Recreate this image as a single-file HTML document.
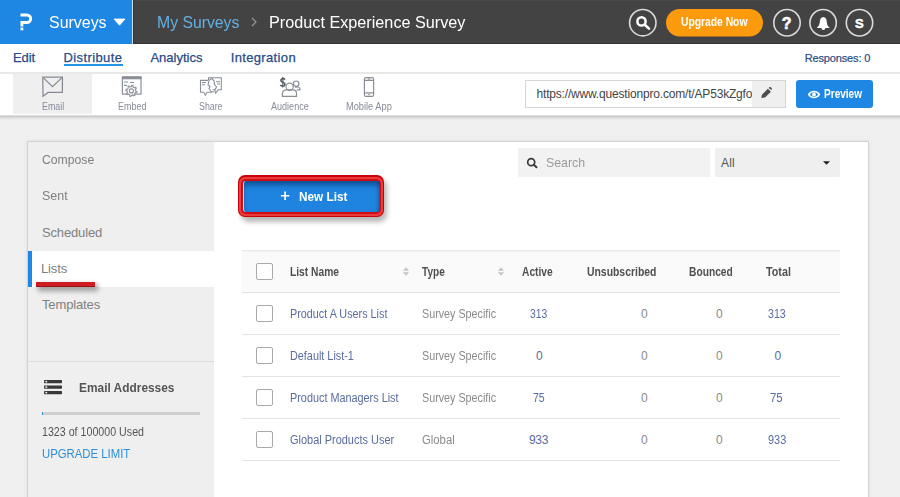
<!DOCTYPE html>
<html><head><meta charset="utf-8">
<style>
*{box-sizing:border-box;margin:0;padding:0}
html,body{width:900px;height:497px;overflow:hidden;background:#f0f0f0;font-family:"Liberation Sans",sans-serif;position:relative}
.a{position:absolute}
.t{position:absolute;white-space:nowrap;line-height:1;font-family:"Liberation Sans",sans-serif}
svg{position:absolute;overflow:visible}
.cb{position:absolute;width:17px;height:17px;border:1px solid #a9a9a9;border-radius:2px;background:#fff}
.hl{position:absolute;left:242px;width:598px;height:1px;background:#e3e3e3}
</style></head><body>
<!-- top bar -->
<div class="a" style="left:0;top:0;width:900px;height:44px;background:#434343;border-top:1px solid #4a4a4a;border-bottom:1px solid #343434"></div>
<div class="a" style="left:0;top:0;width:132px;height:44px;background:#1e87e4"></div>
<div class="a" style="left:132px;top:0;width:1px;height:44px;background:#c9dff2"></div>
<div class="a" style="left:133px;top:0;width:1px;height:44px;background:#353535"></div>
<svg style="left:0;top:0" width="900" height="44">
  <path d="M20.5 15 H27 A3.75 3.75 0 0 1 27 22.5 H21.9 V26.4" fill="none" stroke="#fff" stroke-width="2.8"/>
  <rect x="20.5" y="27.6" width="2.8" height="2.7" fill="#fff"/>
  <path d="M114 19 H125 L119.5 25.2 Z" fill="#fff" stroke="#fff" stroke-width="0.8" stroke-linejoin="round"/>
  <path d="M252 18 L256 22 L252 26" fill="none" stroke="#9a9a9a" stroke-width="1.2"/>
  <circle cx="642.8" cy="22.7" r="13.2" fill="none" stroke="#d9d9d9" stroke-width="1.6"/>
  <circle cx="641.5" cy="21.4" r="4.1" fill="none" stroke="#fff" stroke-width="2.5"/>
  <path d="M644.8 24.7 L649 28.6" stroke="#fff" stroke-width="2.6" stroke-linecap="round"/>
  <rect x="666" y="9" width="97" height="27.4" rx="13.7" fill="#fc9a0e"/>
  <circle cx="787" cy="22.75" r="13.2" fill="none" stroke="#d9d9d9" stroke-width="1.6"/>
  <circle cx="823.1" cy="22.75" r="13.2" fill="none" stroke="#d9d9d9" stroke-width="1.6"/>
  <circle cx="859.5" cy="22.75" r="13.2" fill="none" stroke="#d9d9d9" stroke-width="1.6"/>
  <path d="M823.3 16.9 C821.5 17.2 820.2 18.3 820 20.5 C819.7 24 819.2 25.8 817 27.4 V28.1 H829.4 V27.4 C827.3 25.8 826.9 24 826.6 20.5 C826.4 18.3 825.1 17.2 823.3 16.9 Z" fill="#fff"/>
  <path d="M821.4 28 A1.95 1.95 0 0 0 825.3 28 Z" fill="#fff"/>
</svg>

<!-- nav -->
<div class="a" style="left:0;top:44px;width:900px;height:29px;background:#fff"></div>
<div class="a" style="left:0;top:72px;width:900px;height:2px;background:#e8e8e8"></div>
<div class="a" style="left:64px;top:64px;width:58.5px;height:2px;background:#2393e6"></div>

<!-- toolbar -->
<div class="a" style="left:0;top:74px;width:900px;height:41px;background:#fff"></div>
<div class="a" style="left:0;top:115px;width:900px;height:1px;background:#dedede"></div>
<div class="a" style="left:0;top:116px;width:900px;height:1px;background:#cbcbcb"></div>
<div class="a" style="left:0;top:117px;width:900px;height:1px;background:#d9d9d9"></div>
<div class="a" style="left:0;top:118px;width:900px;height:1px;background:#e4e4e4"></div>
<div class="a" style="left:0;top:119px;width:900px;height:1px;background:#ebebeb"></div>
<div class="a" style="left:13px;top:74px;width:79px;height:40px;background:#efefef"></div>
<svg style="left:0;top:0" width="900" height="120">
  <g fill="none" stroke="#868b93" stroke-width="1.25">
    <path d="M42.8 77.1 H62.4 V92.4 H48.2 L43 96.2 Z"/>
    <path d="M43.2 77.6 L52.5 86.6 L62 77.6"/>
  </g>
  <g fill="none" stroke="#8a8f97" stroke-width="1.2">
    <rect x="122.4" y="76.9" width="18.6" height="17.2"/>
    <path d="M124 82 H128 M130 82.5 H134 M124 85.3 H127"/>
    
  </g>
  <rect x="122" y="76.5" width="19.4" height="2.8" fill="#8a8f97"/>
  <path d="M135.70 90.90 L136.98 91.43 L136.75 92.55 L135.37 92.55 L134.44 93.94 L134.97 95.21 L134.02 95.85 L133.05 94.87 L131.40 95.20 L130.87 96.48 L129.75 96.25 L129.75 94.87 L128.36 93.94 L127.09 94.47 L126.45 93.52 L127.43 92.55 L127.10 90.90 L125.82 90.37 L126.05 89.25 L127.43 89.25 L128.36 87.86 L127.83 86.59 L128.78 85.95 L129.75 86.93 L131.40 86.60 L131.93 85.32 L133.05 85.55 L133.05 86.93 L134.44 87.86 L135.71 87.33 L136.35 88.28 L135.37 89.25 Z" fill="#fff" stroke="#8a8f97" stroke-width="1.1" stroke-linejoin="round"/>
  <circle cx="131.4" cy="90.9" r="2" fill="none" stroke="#8a8f97" stroke-width="1.1"/>
  <g fill="none" stroke="#8a8f97" stroke-width="1.1">
    <path d="M208 80.4 H200.5 V92.3 H203.6 L205.4 95.2 L207 92.3 H212"/>
    <path d="M208.5 80 V77.7 H221.3 V89.8 H218.3 L215.6 93 L214.8 89.8 H212.5"/>
    <path d="M212 77.8 L209 80.5 L208 85 L210 86.5 L209 88.5 L211 91.5 L214 92"/>
    <path d="M211.7 78.5 L214 80.8 L214.5 84.5 L216.6 87 L214.8 89.6"/>
    <path d="M202 82.5 H206 M202 84.8 H205 M216 81.8 H220 M217 84 H220"/>
  </g>
  <path d="M285 79.6 C284.2 78.6 282.8 78.5 281.8 78.9 C280.5 79.5 280.6 81.2 281.8 81.8 L283.8 82.8 C285.3 83.5 285.3 85.6 283.6 86 C282.5 86.3 281.1 86 280.3 85" fill="none" stroke="#5d626b" stroke-width="1.7"/><path d="M282.8 76.9 V87.6" stroke="#5d626b" stroke-width="1.2"/>
  <g fill="none" stroke="#8a8f97" stroke-width="1.2">
    <circle cx="296.2" cy="83.7" r="2.7"/>
    <path d="M295.2 87.6 C296.5 86.6 299.6 86.6 299.9 88.6 V89.9 H296.8"/>
    <circle cx="289.6" cy="86.7" r="3.6"/>
    <path d="M282.4 96.4 V93.5 C282.4 91 285 89.9 286 89.9 H293 C294.5 89.9 296.5 91 296.5 93.5 V96.4 Z"/>
  </g>
  <g fill="none" stroke="#8a8f97" stroke-width="1.2">
    <rect x="364.4" y="77.6" width="9.2" height="18.8" rx="1.5"/>
    <path d="M364.4 80.3 H373.6 M364.4 92.8 H373.6 M367.8 79 H370.2"/>
  </g>
  <circle cx="369" cy="94.6" r="0.8" fill="#8a8f97"/>
</svg>
<!-- url input -->
<div class="a" style="left:525px;top:80px;width:261px;height:28px;border:1px solid #d6d6d6;background:#fff"></div>

<!-- card -->
<div class="a" style="left:28px;top:142px;width:840px;height:360px;background:#fff;box-shadow:0 0 0 1px rgba(0,0,0,.08),0 0 4px 1px rgba(0,0,0,.08)"></div>
<div class="a" style="left:28px;top:142px;width:186px;height:360px;background:#efefef"></div>
<div class="a" style="left:28px;top:251px;width:186px;height:36px;background:#fff"></div>
<div class="a" style="left:28px;top:251px;width:4px;height:36px;background:#1f88e5"></div>
<div class="a" style="left:28px;top:361px;width:186px;height:1px;background:#dcdcdc"></div>
<div class="a" style="left:42px;top:412px;width:158px;height:3px;background:#cfcfcf"></div>
<div class="a" style="left:42px;top:412px;width:1px;height:3px;background:#2b8fd6"></div>
<svg style="left:0;top:0" width="900" height="497">
  <g fill="#383838">
    <rect x="44" y="380" width="18" height="3.3" rx="0.7"/>
    <rect x="44" y="385.5" width="18" height="3.3" rx="0.7"/>
    <rect x="44" y="391" width="18" height="3.3" rx="0.7"/>
  </g>
  <g fill="#f4f4f4">
    <rect x="45.4" y="380.9" width="1.8" height="1.5"/><rect x="45.4" y="386.4" width="1.8" height="1.5"/><rect x="45.4" y="391.9" width="1.8" height="1.5"/>
  </g>
</svg>
<!-- red underline on Lists -->
<div class="a" style="left:38px;top:284px;width:60px;height:7px;background:rgba(0,0,0,.35);filter:blur(2.5px)"></div>
<div class="a" style="left:36px;top:281.5px;width:58.6px;height:5px;background:#cf1b22;border-bottom:1px solid #9e1015"></div>

<!-- search + dropdown -->
<div class="a" style="left:518px;top:148px;width:192px;height:29px;background:#f2f2f2"></div>
<div class="a" style="left:715px;top:148px;width:125px;height:29px;background:#efefef;border-radius:2px"></div>
<svg style="left:0;top:0" width="900" height="497">
  <circle cx="531.2" cy="162.2" r="3.5" fill="none" stroke="#3b3b3b" stroke-width="1.7"/>
  <path d="M533.8 164.8 L536.5 167.3" stroke="#3b3b3b" stroke-width="2" stroke-linecap="round"/>
  <path d="M823 161.2 H830 L826.5 164.7 Z" fill="#222"/>
</svg>

<!-- New List button -->
<div class="a" style="left:241px;top:179px;width:146px;height:43px;border-radius:8px;background:rgba(0,0,0,.28);filter:blur(2.5px)"></div>
<div class="a" style="left:237.5px;top:175px;width:146.7px;height:42px;border-radius:7px;background:#c9000a"></div>
<div class="a" style="left:239px;top:176.5px;width:143.7px;height:39px;border-radius:6px;background:#ec3b3b"></div>
<div class="a" style="left:241px;top:178.5px;width:139.7px;height:35px;border-radius:5px;background:#cf0d14"></div>
<div class="a" style="left:243.3px;top:180.5px;width:136.5px;height:31.5px;border-radius:3px;background:#1f84df;box-shadow:inset 0 5px 5px -1px rgba(10,40,90,.55),inset -3px 0 3px -1px rgba(10,40,90,.3);border-left:1px solid #d9e6f2"></div>
<svg style="left:0;top:0" width="900" height="497">
  <path d="M285.1 191.6 V199.9 M280.9 195.75 H289.3" stroke="#fff" stroke-width="1.7"/>
</svg>

<!-- table -->
<div class="a" style="left:242px;top:250px;width:598px;height:42px;background:#fafafa"></div>
<div class="hl" style="top:250px;background:#e9e9e9"></div>
<div class="hl" style="top:251px;background:#f2f2f2"></div>
<div class="hl" style="top:292px"></div>
<div class="hl" style="top:334px"></div>
<div class="hl" style="top:376px"></div>
<div class="hl" style="top:418px"></div>
<div class="hl" style="top:460px"></div>
<div class="cb" style="left:256px;top:263px"></div>
<div class="cb" style="left:256px;top:305px"></div>
<div class="cb" style="left:256px;top:347px"></div>
<div class="cb" style="left:256px;top:389px"></div>
<div class="cb" style="left:256px;top:431px"></div>
<svg style="left:0;top:0" width="900" height="497">
  <g fill="#c4c4c4">
    <path d="M403 270.7 H409 L406 267.3 Z M403 272.3 H409 L406 275.7 Z"/>
    <path d="M498 270.7 H504 L501 267.3 Z M498 272.3 H504 L501 275.7 Z"/>
  </g>
</svg>

<div class="t" style="left:781.80px;top:15.96px;font-size:16px;font-weight:700;color:#ffffff;letter-spacing:0.000px;-webkit-text-stroke:0.6px #fff">?</div>
<div class="t" style="left:855.00px;top:17.00px;font-size:13px;font-weight:700;color:#ffffff;letter-spacing:0.000px;-webkit-text-stroke:0.5px #fff">S</div>
<div class="t" style="left:48.70px;top:13.91px;font-size:17px;font-weight:400;color:#ffffff;transform:scaleX(0.9375);transform-origin:0 0;">Surveys</div>
<div class="t" style="left:157.07px;top:13.61px;font-size:17px;font-weight:400;color:#64b0e2;transform:scaleX(0.9279);transform-origin:0 0;">My Surveys</div>
<div class="t" style="left:269.05px;top:13.61px;font-size:17px;font-weight:400;color:#ffffff;transform:scaleX(0.9538);transform-origin:0 0;">Product Experience Survey</div>
<div class="t" style="left:681.00px;top:16.14px;font-size:12px;font-weight:700;color:#ffffff;transform:scaleX(0.8589);transform-origin:0 0;">Upgrade Now</div>
<div class="t" style="left:12.90px;top:51.30px;font-size:13px;font-weight:400;color:#284a86;letter-spacing:-0.030px;-webkit-text-stroke:0.25px #284a86">Edit</div>
<div class="t" style="left:63.40px;top:51.30px;font-size:13px;font-weight:400;color:#284a86;letter-spacing:0.414px;-webkit-text-stroke:0.25px #284a86">Distribute</div>
<div class="t" style="left:150.40px;top:51.30px;font-size:13px;font-weight:400;color:#284a86;letter-spacing:0.010px;-webkit-text-stroke:0.25px #284a86">Analytics</div>
<div class="t" style="left:230.70px;top:51.30px;font-size:13px;font-weight:400;color:#284a86;letter-spacing:0.350px;-webkit-text-stroke:0.25px #284a86">Integration</div>
<div class="t" style="left:804.70px;top:53.09px;font-size:11px;font-weight:400;color:#284a86;letter-spacing:-0.140px;-webkit-text-stroke:0.2px #284a86">Responses: 0</div>
<div class="t" style="left:41.90px;top:102.03px;font-size:10px;font-weight:400;color:#878c98;transform:scaleX(0.8877);transform-origin:0 0;">Email</div>
<div class="t" style="left:117.60px;top:102.13px;font-size:10px;font-weight:400;color:#878c98;transform:scaleX(0.8997);transform-origin:0 0;">Embed</div>
<div class="t" style="left:199.00px;top:102.13px;font-size:10px;font-weight:400;color:#878c98;transform:scaleX(0.8812);transform-origin:0 0;">Share</div>
<div class="t" style="left:270.90px;top:102.13px;font-size:10px;font-weight:400;color:#878c98;transform:scaleX(0.9042);transform-origin:0 0;">Audience</div>
<div class="t" style="left:345.50px;top:102.13px;font-size:10px;font-weight:400;color:#878c98;transform:scaleX(0.9253);transform-origin:0 0;">Mobile App</div>
<div class="t" style="left:546.00px;top:155.80px;font-size:13px;font-weight:400;color:#9a9a9a;transform:scaleX(0.9473);transform-origin:0 0;">Search</div>
<div class="t" style="left:721.00px;top:156.84px;font-size:12px;font-weight:400;color:#555555;letter-spacing:0.165px;">All</div>
<div class="t" style="left:299.20px;top:189.50px;font-size:13px;font-weight:700;color:#ffffff;transform:scaleX(0.9053);transform-origin:0 0;">New List</div>
<div class="t" style="left:42.00px;top:153.00px;font-size:13px;font-weight:400;color:#808080;transform:scaleX(0.9385);transform-origin:0 0;">Compose</div>
<div class="t" style="left:42.00px;top:189.40px;font-size:13px;font-weight:400;color:#808080;transform:scaleX(0.9583);transform-origin:0 0;">Sent</div>
<div class="t" style="left:42.00px;top:225.50px;font-size:13px;font-weight:400;color:#808080;letter-spacing:-0.151px;">Scheduled</div>
<div class="t" style="left:41.00px;top:262.00px;font-size:13px;font-weight:400;color:#808080;letter-spacing:-0.132px;">Lists</div>
<div class="t" style="left:42.00px;top:298.20px;font-size:13px;font-weight:400;color:#808080;letter-spacing:-0.131px;">Templates</div>
<div class="t" style="left:78.60px;top:381.30px;font-size:13px;font-weight:700;color:#555555;transform:scaleX(0.9154);transform-origin:0 0;">Email Addresses</div>
<div class="t" style="left:42.00px;top:426.04px;font-size:12px;font-weight:400;color:#555555;transform:scaleX(0.8888);transform-origin:0 0;">1323 of 100000 Used</div>
<div class="t" style="left:42.40px;top:448.04px;font-size:12px;font-weight:400;color:#2b90d9;transform:scaleX(0.9456);transform-origin:0 0;">UPGRADE LIMIT</div>
<div class="t" style="left:290.00px;top:265.54px;font-size:12px;font-weight:700;color:#505050;transform:scaleX(0.8547);transform-origin:0 0;">List Name</div>
<div class="t" style="left:422.00px;top:265.54px;font-size:12px;font-weight:700;color:#505050;transform:scaleX(0.8381);transform-origin:0 0;">Type</div>
<div class="t" style="left:522.00px;top:265.54px;font-size:12px;font-weight:700;color:#505050;transform:scaleX(0.8530);transform-origin:0 0;">Active</div>
<div class="t" style="left:587.40px;top:265.54px;font-size:12px;font-weight:700;color:#505050;transform:scaleX(0.8672);transform-origin:0 0;">Unsubscribed</div>
<div class="t" style="left:688.50px;top:265.54px;font-size:12px;font-weight:700;color:#505050;transform:scaleX(0.8529);transform-origin:0 0;">Bounced</div>
<div class="t" style="left:766.30px;top:265.54px;font-size:12px;font-weight:700;color:#505050;transform:scaleX(0.8965);transform-origin:0 0;">Total</div>
<div class="t" style="left:289.60px;top:308.14px;font-size:12px;font-weight:400;color:#5a6c9e;transform:scaleX(0.9015);transform-origin:0 0;">Product A Users List</div>
<div class="t" style="left:421.70px;top:308.14px;font-size:12px;font-weight:400;color:#8a8a8a;transform:scaleX(0.8960);transform-origin:0 0;">Survey Specific</div>
<div class="t" style="left:530.00px;top:308.14px;font-size:12px;font-weight:400;color:#5a6c9e;transform:scaleX(0.8600);transform-origin:0 0;">313</div>
<div class="t" style="left:641.00px;top:308.14px;font-size:12px;font-weight:400;color:#8a8a8a;letter-spacing:0.000px;">0</div>
<div class="t" style="left:716.00px;top:308.14px;font-size:12px;font-weight:400;color:#8a8a8a;letter-spacing:0.000px;">0</div>
<div class="t" style="left:768.00px;top:308.14px;font-size:12px;font-weight:400;color:#5a6c9e;transform:scaleX(0.8846);transform-origin:0 0;">313</div>
<div class="t" style="left:289.60px;top:350.14px;font-size:12px;font-weight:400;color:#5a6c9e;transform:scaleX(0.9032);transform-origin:0 0;">Default List-1</div>
<div class="t" style="left:421.70px;top:350.14px;font-size:12px;font-weight:400;color:#8a8a8a;transform:scaleX(0.8960);transform-origin:0 0;">Survey Specific</div>
<div class="t" style="left:536.00px;top:350.14px;font-size:12px;font-weight:400;color:#5a6c9e;letter-spacing:0.000px;">0</div>
<div class="t" style="left:641.00px;top:350.14px;font-size:12px;font-weight:400;color:#8a8a8a;letter-spacing:0.000px;">0</div>
<div class="t" style="left:716.00px;top:350.14px;font-size:12px;font-weight:400;color:#8a8a8a;letter-spacing:0.000px;">0</div>
<div class="t" style="left:774.60px;top:350.14px;font-size:12px;font-weight:400;color:#5a6c9e;letter-spacing:0.000px;">0</div>
<div class="t" style="left:289.60px;top:392.14px;font-size:12px;font-weight:400;color:#5a6c9e;transform:scaleX(0.9041);transform-origin:0 0;">Product Managers List</div>
<div class="t" style="left:421.70px;top:392.14px;font-size:12px;font-weight:400;color:#8a8a8a;transform:scaleX(0.8960);transform-origin:0 0;">Survey Specific</div>
<div class="t" style="left:533.00px;top:392.14px;font-size:12px;font-weight:400;color:#5a6c9e;transform:scaleX(0.8776);transform-origin:0 0;">75</div>
<div class="t" style="left:641.00px;top:392.14px;font-size:12px;font-weight:400;color:#8a8a8a;letter-spacing:0.000px;">0</div>
<div class="t" style="left:716.00px;top:392.14px;font-size:12px;font-weight:400;color:#8a8a8a;letter-spacing:0.000px;">0</div>
<div class="t" style="left:770.00px;top:392.14px;font-size:12px;font-weight:400;color:#5a6c9e;transform:scaleX(0.9507);transform-origin:0 0;">75</div>
<div class="t" style="left:289.60px;top:434.14px;font-size:12px;font-weight:400;color:#5a6c9e;transform:scaleX(0.9132);transform-origin:0 0;">Global Products User</div>
<div class="t" style="left:421.70px;top:434.14px;font-size:12px;font-weight:400;color:#8a8a8a;transform:scaleX(0.9421);transform-origin:0 0;">Global</div>
<div class="t" style="left:529.00px;top:434.14px;font-size:12px;font-weight:400;color:#5a6c9e;letter-spacing:-0.299px;">933</div>
<div class="t" style="left:641.00px;top:434.14px;font-size:12px;font-weight:400;color:#8a8a8a;letter-spacing:0.000px;">0</div>
<div class="t" style="left:716.00px;top:434.14px;font-size:12px;font-weight:400;color:#8a8a8a;letter-spacing:0.000px;">0</div>
<div class="t" style="left:767.50px;top:434.14px;font-size:12px;font-weight:400;color:#5a6c9e;transform:scaleX(0.9092);transform-origin:0 0;">933</div>
<div class="t" style="left:536.50px;top:87.54px;font-size:12px;font-weight:400;color:#444444;letter-spacing:-0.180px;">https://www.questionpro.com/t/AP53kZgfo</div>

<!-- pencil box overlays url text end -->
<div class="a" style="left:752px;top:81px;width:33px;height:26px;background:#efefef"></div>
<svg style="left:0;top:0" width="900" height="497">
  <path d="M761.3 97.9 L762 94.7 L767.9 88.8 L770.9 91.8 L765 97.6 Z" fill="#4d4d4d"/><path d="M768.6 88.1 L769.4 87.3 C769.8 86.9 770.4 86.9 770.8 87.3 L771.7 88.2 C772.1 88.6 772.1 89.2 771.7 89.6 L771.5 89.9 Z" fill="#4d4d4d"/>
</svg>
<!-- preview button -->
<div class="a" style="left:796px;top:80px;width:77px;height:27.6px;background:#1e87e4;border-radius:3px"></div>
<svg style="left:0;top:0" width="900" height="497">
  <path d="M807.8 94.6 C810.3 89.6 817.7 89.6 820.2 94.6 C817.7 99.6 810.3 99.6 807.8 94.6 Z" fill="#fff"/>
  <path d="M809.9 94.6 C811.8 91.6 816.2 91.6 818.1 94.6 C816.2 97.6 811.8 97.6 809.9 94.6 Z" fill="#1e87e4"/>
  <circle cx="814" cy="94.4" r="1.9" fill="#fff"/>
</svg>
<div class="t" style="left:824.40px;top:87.64px;font-size:12px;font-weight:700;color:#ffffff;transform:scaleX(0.8386);transform-origin:0 0;">Preview</div>
</body></html>
